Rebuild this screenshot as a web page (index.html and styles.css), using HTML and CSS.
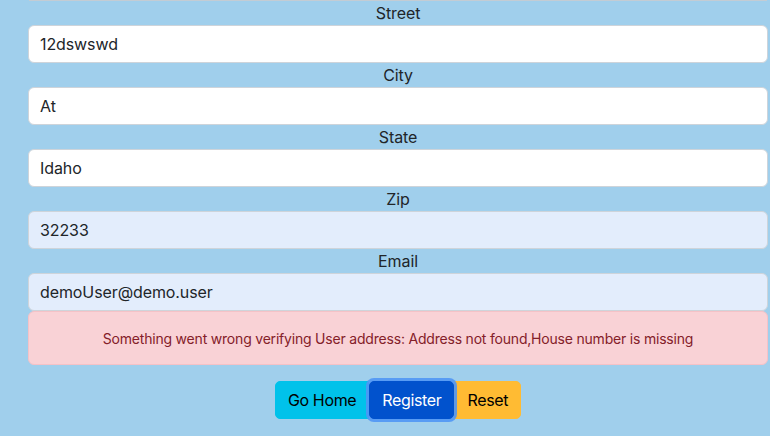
FILE: index.html
```html
<!DOCTYPE html>
<html>
<head>
<meta charset="utf-8">
<link rel="stylesheet" href="styles.css">
</head>
<body>
<div class="page">
  <div class="prev-edge"></div>
  <form class="form">
    <div class="field">
      <label class="label">Street</label>
      <input class="input" type="text" value="12dswswd">
    </div>
    <div class="field">
      <label class="label">City</label>
      <input class="input" type="text" value="At">
    </div>
    <div class="field">
      <label class="label">State</label>
      <input class="input" type="text" value="Idaho">
    </div>
    <div class="field">
      <label class="label">Zip</label>
      <input class="input autofill" type="text" value="32233">
    </div>
    <div class="field">
      <label class="label">Email</label>
      <input class="input autofill" type="text" value="demoUser@demo.user">
    </div>
    <div class="alert">Something went wrong verifying User address: Address not found,House number is missing</div>
    <div class="actions">
      <div class="btn-group">
        <button type="button" class="btn btn-info">Go Home</button>
        <button type="button" class="btn btn-primary">Register</button>
        <button type="button" class="btn btn-warning">Reset</button>
      </div>
    </div>
  </form>
</div>
</body>
</html>
```
FILE: styles.css
```css
html, body {
  margin: 0;
  padding: 0;
  background: #a0cfec;
  font-family: Inter, "Noto Sans", sans-serif;
  color: #212529;
}
.page {
  padding: 0 2px 0 28px;
  height: 436px;
  overflow: hidden;
}
.prev-edge {
  height: 0;
  border-bottom: 1px solid #c3ccd4;
  margin: 0 1px;
}
.form {
  display: flex;
  flex-direction: column;
}
.field {
  display: flex;
  flex-direction: column;
}
.label {
  display: block;
  text-align: center;
  font-size: 16px;
  line-height: 24px;
  height: 24px;
  letter-spacing: -0.1px;
}
.input {
  box-sizing: border-box;
  height: 38px;
  width: 100%;
  margin: 0;
  padding: 6px 12px 6px 11px;
  font-family: inherit;
  font-size: 16px;
  line-height: 24px;
  letter-spacing: -0.1px;
  color: #212529;
  background: #fff;
  border: 1px solid #ced4da;
  border-radius: 6px;
  outline: none;
}
.input.autofill {
  background: #e3edfc;
}
.alert {
  box-sizing: border-box;
  height: 54px;
  display: flex;
  align-items: center;
  justify-content: center;
  padding: 0 16px;
  background: #f9d2d6;
  border: 1px solid #f5c2c7;
  border-radius: 6px;
  color: #842029;
  font-size: 14px;
  line-height: 21px;
  letter-spacing: -0.2px;
}
.actions {
  display: flex;
  justify-content: center;
  padding-top: 16px;
}
.btn-group {
  display: flex;
}
.btn {
  height: 38px;
  margin: 0;
  padding: 6px 12px;
  font-family: inherit;
  font-size: 16px;
  line-height: 24px;
  letter-spacing: -0.35px;
  border: 1px solid transparent;
  border-radius: 0;
  cursor: pointer;
}
.btn-info {
  background: #00c2ea;
  border-color: #00c2ea;
  color: #000;
  border-radius: 5px 0 0 5px;
}
.btn-primary {
  background: #0152cd;
  border-color: #0152cd;
  color: #fff;
  border-radius: 5px;
  box-shadow: 0 0 0 3px rgba(80, 150, 245, 0.9);
  position: relative;
  z-index: 1;
}
.btn-warning {
  background: #ffbb33;
  border-color: #ffbb33;
  color: #000;
  border-radius: 0 5px 5px 0;
}
```
